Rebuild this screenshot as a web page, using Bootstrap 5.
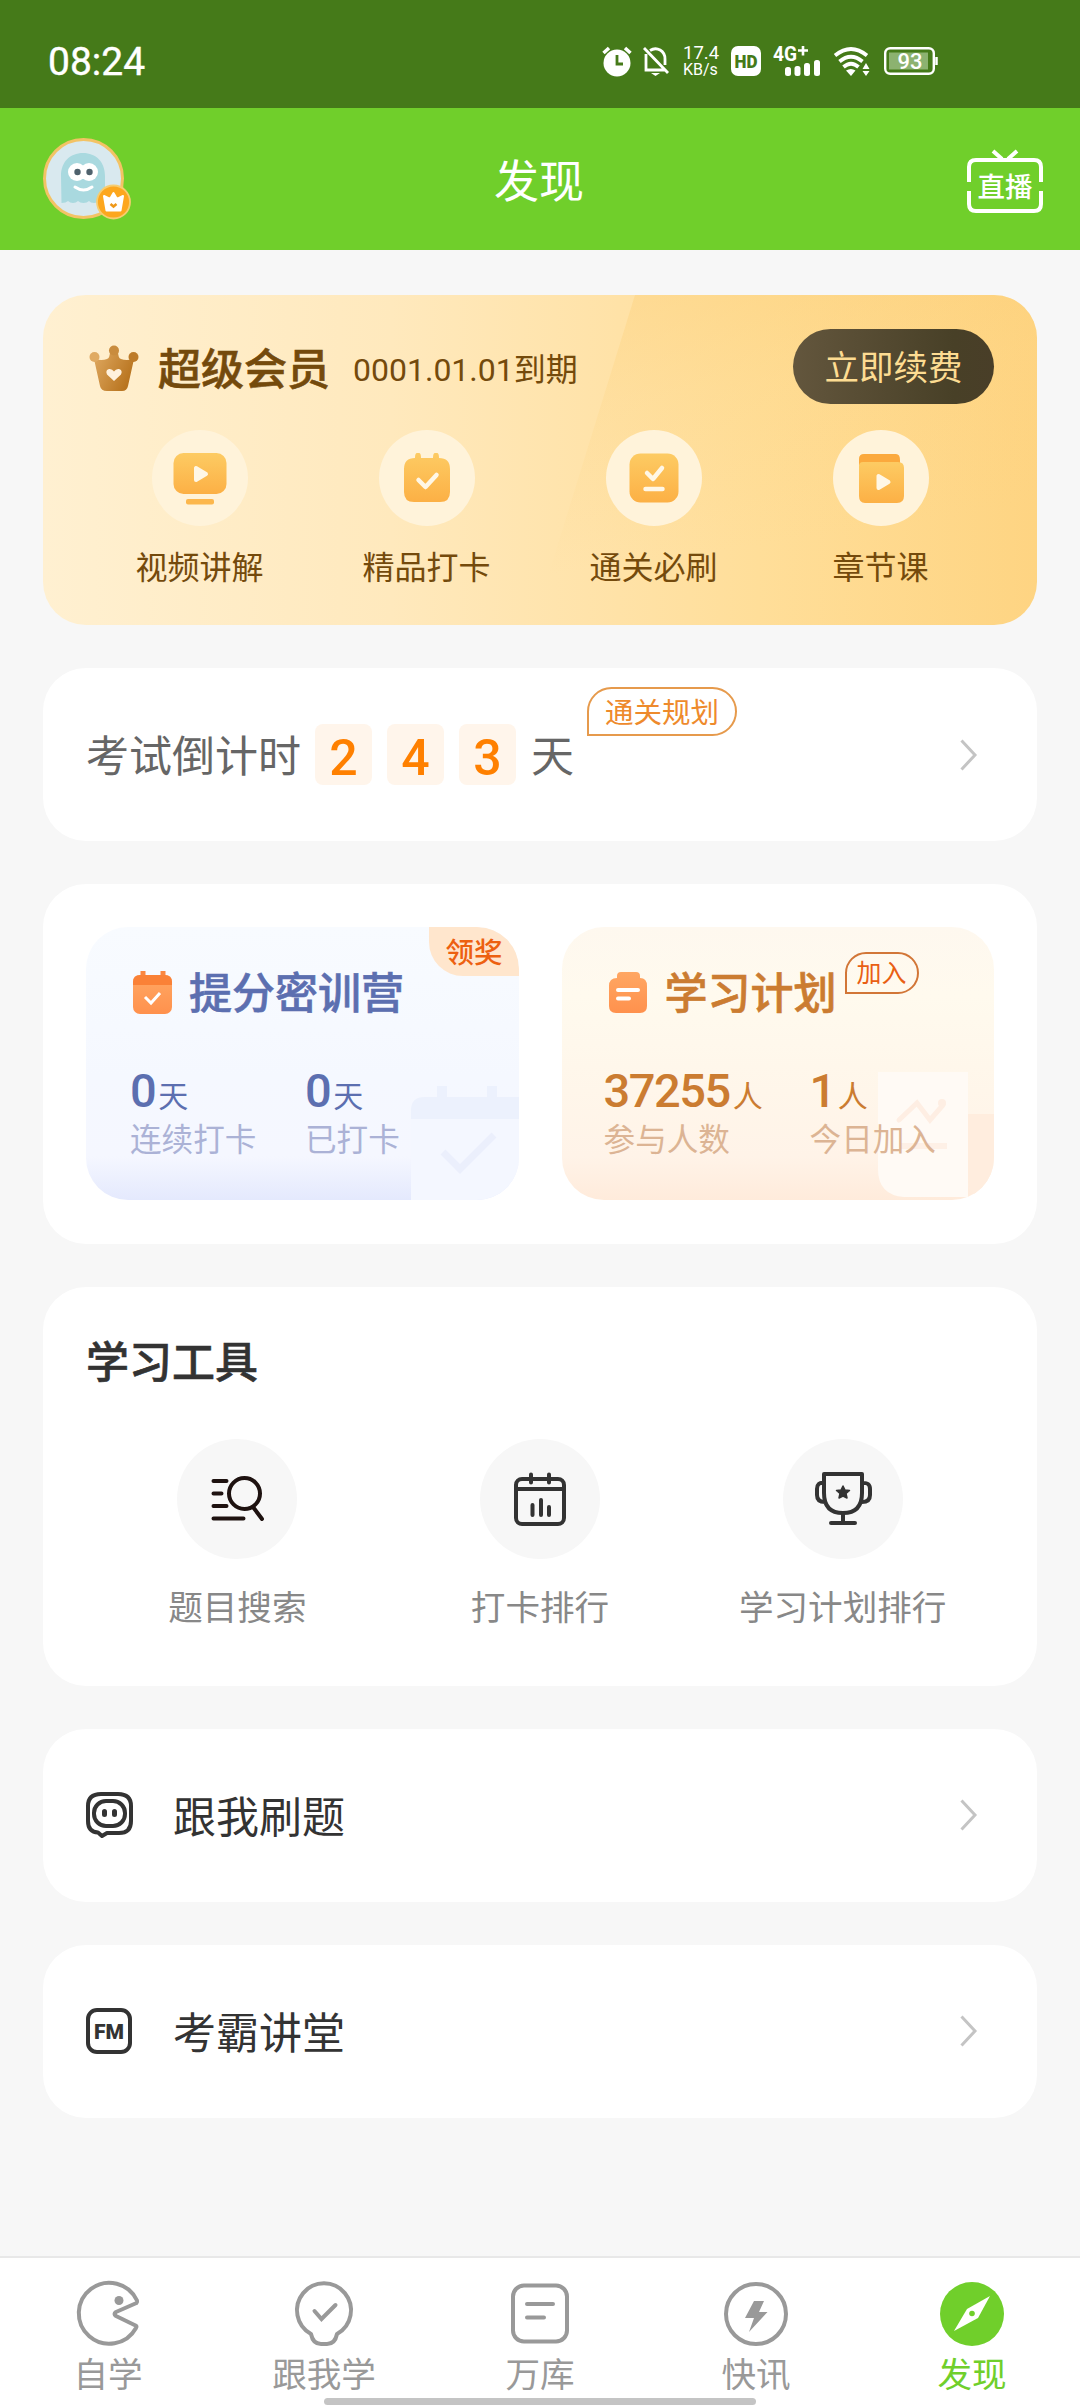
<!DOCTYPE html>
<html lang="zh-CN">
<head>
<meta charset="utf-8">
<meta name="viewport" content="width=device-width, initial-scale=1">
<title>发现</title>
<link href="https://cdn.jsdelivr.net/npm/bootstrap@5.3.0/dist/css/bootstrap.min.css" rel="stylesheet">
<style>
body{width:1080px;height:2408px;background:#f7f7f7;font-family:Roboto,"Noto Sans CJK SC",sans-serif;color:#333;overflow:hidden}
svg{display:block;flex:none;overflow:visible}
.statusbar{height:108px;background:#457a19;padding:14px 142px 0 48px;color:#fff}
.clock{font-size:39px;line-height:46px;font-weight:400;-webkit-text-stroke:.4px #fff;padding-top:2px}
.speed{font-size:18.5px;line-height:16px;width:36px;margin:0 12px 0 13px;white-space:nowrap}
.speed div+div{font-size:16px;line-height:16px;padding-top:1px}
.appbar{height:142px;background:#70cf2b;padding:0 37px 0 43px;color:#fff}
.apptitle{font-size:45px;line-height:60px;margin-left:-20px;padding-top:7px}
.panel{border:0;border-radius:43px;background:#fff}
.pagebody{padding:45px 43px 0;gap:43px}
.vip{height:330px;background:linear-gradient(90deg,#fff0d1 0%,#ffe9bd 35%,#ffe2a7 58%,#ffde99 72%,#fed482 100%);overflow:hidden;padding:34px 43px 0}
.vip::before{content:"";position:absolute;inset:0;clip-path:polygon(592px 0,100% 0,100% 100%,490px 100%);background:linear-gradient(172deg,rgba(251,201,105,.42) 0%,rgba(253,210,125,.22) 40%,rgba(255,215,140,0) 75%)}
.vip>*{position:relative}
.viphead{height:75px;padding-left:3px}
.viptitle{font-size:43px;font-weight:500;color:#744a0c;line-height:50px;margin-left:19px;padding-top:7px;-webkit-text-stroke:.6px #744a0c}
.vipdate{font-size:32px;color:#744a0c;line-height:50px;margin-left:23px;padding-top:7px}
.renew{width:201px;height:75px;border-radius:38px;background:linear-gradient(90deg,#63563d,#484027 80%,#493e28);color:#fddc92;font-size:34.5px;line-height:75px;padding:2px 0 0;border:0}
.vipitem{padding-top:26px}
.vipring{width:96px;height:96px;border-radius:50%;background:#fff3da}
.viplabel{font-size:32px;line-height:44px;margin-top:20px;color:#744a0c}
.countdown{height:173px;padding:0 60px 0 43px}
.cdtext{font-size:43px;line-height:60px;color:#666;padding-top:5px}
.digit{width:57px;height:61px;border-radius:8px;background:#fff5eb;color:#ff8000;font-size:50px;font-weight:500;line-height:69px;text-align:center}
.bubble{border:2px solid #e69a4c;border-radius:25px 25px 25px 0;color:#ee8a2c;text-align:center;white-space:nowrap}
.bub1{width:150px;height:49px;font-size:28.5px;line-height:49px;margin:-86px 0 0 13px}
.bub2{width:74px;height:42px;border-radius:21px 21px 21px 0;font-size:25px;line-height:39px;border-color:#d27637;color:#e95f13;margin:-40px 0 0 8px}
.plans{height:360px;padding:43px;gap:43px}
.plancard{height:273px;border-radius:42px;overflow:hidden;position:relative;padding:42px 0 0 44px}
.plan-a{background:linear-gradient(180deg,#f8fbff 0%,#f5f8ff 55%,#f5f7ff 84%,#e4e9fd 100%);color:#5c6fb0}
.plan-b{background:linear-gradient(180deg,#fef8ef 0%,#fffaee 25%,#fff6ea 60%,#fff3e8 84%,#ffebdb 100%);color:#cb7c31;padding-left:42px}
.deco{position:absolute;right:0;bottom:0}
.ribbon{position:absolute;right:0;top:0;width:90px;height:49px;background:#ffe6cd;border-radius:0 40px 0 34px;color:#ed6010;font-size:28.5px;font-weight:500;line-height:53px;padding-left:17px}
.planhead{height:48px;position:relative}
.plantitle{font-size:43px;font-weight:500;line-height:48px;margin-left:15px;padding-top:2px;-webkit-text-stroke:.6px currentColor}
.stats{margin-top:48px;position:relative}
.statnum{font-size:47px;font-weight:500;line-height:52px;letter-spacing:-1.5px;white-space:nowrap}
.statnum span{font-size:30px;font-weight:400;letter-spacing:0;margin-left:3px}
.statlabel{font-size:31.6px;line-height:44px;margin-top:-4px;white-space:nowrap}
.plan-a .statlabel{color:#abb2d6}
.plan-b .statlabel{color:#dcb494}
.tools{height:399px;padding:45px 43px 0}
.toolhead{font-size:43px;font-weight:500;line-height:62px;margin:0;-webkit-text-stroke:.6px #333}
.toolring{width:120px;height:120px;border-radius:50%;background:#f7f7f7;margin-top:45px}
.toollabel{font-size:34.6px;line-height:48px;margin-top:25px;color:#888}
.linkrow{height:173px;padding:0 60px 0 43px}
.linkrow>svg{margin-top:-2px}
.linktext{font-size:43px;line-height:60px;margin-left:40px;padding-top:4px}
.tabbar{position:fixed;left:0;bottom:0;width:1080px;height:152px;background:#fff;border-top:2px solid #e8e8e8;padding-top:22px}
.tabitem{flex:1 1 0;color:#999}
.tabitem.on{color:#70cf2b}
.tablabel{font-size:34.6px;line-height:44px;margin-top:5px}
.homebar{position:absolute;left:324px;bottom:3px;width:432px;height:7px;border-radius:4px;background:#c4c4c4}
</style>
</head>
<body>
<svg width="0" height="0" class="position-absolute"><defs>
<linearGradient id="gold" x1="0" y1="0" x2="0" y2="1"><stop offset="0" stop-color="#fdcb63"/><stop offset="1" stop-color="#fcb045"/></linearGradient>
<linearGradient id="bronze" x1="0" y1="0" x2="1" y2=".5"><stop offset="0" stop-color="#e0aa62"/><stop offset="1" stop-color="#b8741f"/></linearGradient>
<linearGradient id="orange" x1="0" y1="0" x2="0" y2="1"><stop offset="0" stop-color="#ffa763"/><stop offset="1" stop-color="#ff914d"/></linearGradient>
</defs></svg>

<div class="statusbar d-flex align-items-center justify-content-between">
  <div class="clock">08:24</div>
  <div class="d-flex align-items-center">
    <svg width="30" height="30" viewBox="0 0 30 30"><circle cx="15" cy="17" r="13.500" fill="#fff"/><path d="M1.500 7L7 2M28.500 7L23 2" stroke="#fff" stroke-width="3.500"/><path d="M15 9v9h6" fill="none" stroke="#457a19" stroke-width="2.800"/></svg>
    <svg class="ms-2" width="30" height="30" viewBox="0 0 30 30" fill="none" stroke="#fff" stroke-width="2.800"><path d="M4 2l24 25M6 8v16h19M10 4.500C17 0 25 5 25 13v6"/><path d="M11 27h9l-4.500 3z" fill="#fff" stroke="none"/></svg>
    <div class="speed"><div>17.4</div><div>KB/s</div></div>
    <svg width="30" height="30" viewBox="0 0 30 30"><rect width="30" height="30" rx="7" fill="#fff"/><text x="15" y="21.500" text-anchor="middle" font-size="18" font-weight="900" fill="#457a19" textLength="23" lengthAdjust="spacingAndGlyphs">HD</text></svg>
    <svg style="margin-left:12px" width="48" height="30" viewBox="0 0 48 30" fill="#fff"><text x="0" y="15" font-size="20" font-weight="700" textLength="24" lengthAdjust="spacingAndGlyphs">4G</text><path d="M25 4.500h10M30 0v9.500" stroke="#fff" stroke-width="2.600"/><rect x="12" y="21" width="6" height="9" rx="2.500"/><rect x="21.500" y="20" width="6" height="10" rx="2.500"/><rect x="31" y="17" width="6" height="13" rx="2.500"/><rect x="41" y="14" width="6" height="16" rx="2.500"/></svg>
    <svg style="margin-left:12px" width="38" height="30" viewBox="0 0 38 30" fill="none" stroke="#fff" stroke-width="3.800"><path d="M2 9.500Q18 -3.500 34 9.500M6.500 15.500Q18 6 29.500 15.500M10.500 21Q18 14.500 25.500 21" /><path d="M13 24.500Q18 21.500 22.500 24.500L18 30z" fill="#fff" stroke="none"/><path d="M33 17l3.500 6h-7zM33 30l3.500-5h-7z" fill="#fff" stroke="none"/></svg>
    <svg style="margin-left:13px" width="54" height="28" viewBox="0 0 54 28"><rect x="1.200" y="1.200" width="48.600" height="25.600" rx="5" fill="none" stroke="#fff" stroke-width="2.400"/><rect x="5" y="5.500" width="39" height="17" fill="#8cb270"/><path d="M52.500 10v8" stroke="#fff" stroke-width="2.500"/><text x="26" y="22" text-anchor="middle" font-size="22" font-weight="500" fill="#fff">93</text></svg>
  </div>
</div>

<div class="appbar d-flex align-items-center justify-content-between">
  <svg width="88" height="82" viewBox="0 0 88 82">
    <circle cx="40.500" cy="40.500" r="39" fill="#d9e9ef" stroke="#f3c365" stroke-width="3"/>
    <path d="M18 38C18 24 27 15 40 15s22 9 22 23v27q-4 0-5.500-2q-2 2-5.500 2t-5-2q-2 2-5.500 2t-5.500-2q-2 2-5 2t-5-2q-2 2-6.500 2z" fill="#a9d9df"/>
    <circle cx="34" cy="34" r="9" fill="#fff"/><circle cx="46" cy="34" r="9" fill="#fff"/><circle cx="34.500" cy="34" r="3.200" fill="#4f626d"/><circle cx="46.500" cy="34" r="3.200" fill="#4f626d"/>
    <path d="M32 49q8.500 6 17 0" fill="none" stroke="#fff" stroke-width="3" stroke-linecap="round"/>
    <circle cx="70.500" cy="64" r="16.500" fill="#fda71e" stroke="#f7cd70" stroke-width="1.800"/>
    <path d="M61 58l6 3 3.500-6 3.500 6 6-3-2.500 14.500h-14z" fill="#fff" stroke="#fff" stroke-width="2" stroke-linejoin="round"/><path d="M67.500 66l3 2.500 3-2.500" fill="none" stroke="#ef9818" stroke-width="2.500"/>
  </svg>
  <div class="apptitle">发现</div>
  <svg class="mt-1" width="76" height="66" viewBox="0 0 76 66" fill="none" stroke="#fff" stroke-width="4"><path d="M2 34V19q0-7 7-7h58q7 0 7 7v15M2 43v13q0 7 7 7h58q7 0 7-7V43M26 3l9 8M50 3l-9 8"/><text x="38" y="48.500" text-anchor="middle" font-size="27.500" font-weight="500" fill="#fff" stroke="none">直播</text></svg>
</div>

<main class="pagebody d-flex flex-column">
  <section class="panel vip card">
    <div class="viphead d-flex align-items-center">
      <svg class="mt-1" width="50" height="47" viewBox="0 0 50 47"><path d="M5 14q8 2 13 0 3-1 3-8h8q0 7 3 8 5 2 13 0l-6 27q-1 5-6 5H18q-6 0-7-5z" fill="url(#bronze)"/><circle cx="5.500" cy="12" r="5" fill="#e0aa62"/><circle cx="25" cy="5.500" r="5" fill="#c98c3e"/><circle cx="44.500" cy="12" r="5" fill="#bd7b28"/><path d="M25 36l-7-6.500q-2-4.500 2-5.500 3-.5 5 2.500 2-3 5-2.500 4 1 2 5.500z" fill="#fff1dd"/></svg>
      <div class="viptitle">超级会员</div>
      <div class="vipdate">0001.01.01到期</div>
      <button class="btn renew ms-auto">立即续费</button>
    </div>
    <div class="row g-0 text-center">
      <div class="col vipitem"><div class="vipring mx-auto d-flex align-items-center justify-content-center"><svg width="54" height="54" viewBox="0 0 54 54"><rect x="0.500" y="2" width="53" height="41" rx="10" fill="url(#gold)"/><rect x="13" y="48" width="28" height="5.500" rx="2" fill="#fcb74d"/><path d="M23 17v12l10-6z" fill="#fff7e6" stroke="#fff7e6" stroke-width="4" stroke-linejoin="round"/></svg></div><div class="viplabel">视频讲解</div></div>
      <div class="col vipitem"><div class="vipring mx-auto d-flex align-items-center justify-content-center"><svg width="48" height="50" viewBox="0 0 48 50"><path d="M14 0h2q2 0 2 5h12q0-5 2-5h2q2 0 2 5 11 0 11 11v23q0 10-10 10H11Q1 49 1 39V16Q1 5 12 5q0-5 2-5z" fill="url(#gold)"/><path d="M15.500 27l7 7 11-12" fill="none" stroke="#fff7e6" stroke-width="4.500" stroke-linecap="round" stroke-linejoin="round"/></svg></div><div class="viplabel">精品打卡</div></div>
      <div class="col vipitem"><div class="vipring mx-auto d-flex align-items-center justify-content-center"><svg width="50" height="50" viewBox="0 0 50 50"><rect x=".5" y=".5" width="49" height="49" rx="11" fill="url(#gold)"/><path d="M18 20l6 6 9-11M16.500 36h17" fill="none" stroke="#fff7e6" stroke-width="4.500" stroke-linecap="round" stroke-linejoin="round"/></svg></div><div class="viplabel">通关必刷</div></div>
      <div class="col vipitem"><div class="vipring mx-auto d-flex align-items-center justify-content-center"><svg width="48" height="50" viewBox="0 0 48 50"><path d="M2 12V6q0-5 5-5h32q4 0 4 6v5z" fill="#fba93d"/><path d="M6 9h35q6 0 6 6v28q0 7-7 7H8q-6 0-6-7V13q0-4 4-4z" fill="url(#gold)"/><path d="M21.500 23v12l10-6z" fill="#fff7e6" stroke="#fff7e6" stroke-width="4" stroke-linejoin="round"/></svg></div><div class="viplabel">章节课</div></div>
    </div>
  </section>

  <section class="panel countdown d-flex align-items-center">
    <div class="cdtext">考试倒计时</div>
    <div class="d-flex" style="gap:15px;margin:0 15px 0 14px"><div class="digit">2</div><div class="digit">4</div><div class="digit">3</div></div>
    <div class="cdtext">天</div>
    <div class="bubble bub1">通关规划</div>
    <svg class="ms-auto" width="17" height="32" viewBox="0 0 17 32" fill="none" stroke="#c4c4c4" stroke-width="3"><path d="M1.500 1.500L15 16 1.500 30.500"/></svg>
  </section>

  <section class="panel plans d-flex">
    <div class="plancard plan-a flex-fill w-50">
      <svg class="deco" width="108" height="114" viewBox="0 0 108 114"><path d="M26 0h10v14H26zM76 0h10v14H76zM0 33V24Q0 11 14 11h94v22z" fill="#ecf1fd"/><path d="M0 33h108v81H0z" fill="#f4f7ff"/><path d="M32 66l17 17 34-34" fill="none" stroke="#ebeffc" stroke-width="7"/></svg>
      <div class="ribbon">领奖</div>
      <div class="planhead d-flex align-items-center">
        <svg width="44" height="46" viewBox="0 0 44 46"><path d="M13 1v8M33 1v8" stroke="#fb8740" stroke-width="5"/><rect x="3" y="5" width="39" height="39" rx="7" fill="url(#orange)"/><path d="M3 15v-3q0-7 7-7h25q7 0 7 7v3z" fill="#fa8137"/><path d="M15 27l6 6 9-10" fill="none" stroke="#fff" stroke-width="3"/></svg>
        <div class="plantitle">提分密训营</div>
      </div>
      <div class="stats d-flex"><div style="width:175px"><div class="statnum">0<span>天</span></div><div class="statlabel">连续打卡</div></div><div><div class="statnum">0<span>天</span></div><div class="statlabel">已打卡</div></div></div>
    </div>
    <div class="plancard plan-b flex-fill w-50">
      <svg class="deco" width="116" height="130" viewBox="0 0 116 130"><path d="M0 2h90v125H26Q0 125 0 99z" fill="#fffaf5"/><path d="M90 44h26v68q-6 10-17 14-9-5-9-18z" fill="#ffedde"/><path d="M21 50l18-17 13 17 13-15" fill="none" stroke="#feeee3" stroke-width="5" stroke-linecap="round"/><circle cx="64" cy="33" r="4" fill="#feeee3"/><path d="M21 76h48" stroke="#fef0e6" stroke-width="6"/></svg>
      <div class="planhead d-flex align-items-center">
        <svg width="46" height="46" viewBox="0 0 46 46"><path d="M13 8V6q0-4 4-4h15q4 0 4 4v2q7 0 7 8v20q0 7-7 7H12q-7 0-7-7V16q0-8 8-8z" fill="url(#orange)"/><path d="M14 20h20M14 28.500h11" stroke="#fff" stroke-width="4" stroke-linecap="round"/></svg>
        <div class="plantitle">学习计划</div>
        <div class="bubble bub2">加入</div>
      </div>
      <div class="stats d-flex"><div style="width:206px"><div class="statnum">37255<span>人</span></div><div class="statlabel">参与人数</div></div><div><div class="statnum">1<span>人</span></div><div class="statlabel">今日加入</div></div></div>
    </div>
  </section>

  <section class="panel tools">
    <h2 class="toolhead">学习工具</h2>
    <div class="row g-0 text-center">
      <div class="col"><div class="toolring mx-auto d-flex align-items-center justify-content-center"><svg width="54" height="48" viewBox="0 0 54 48" fill="none" stroke="#1e1210" stroke-width="4" stroke-linecap="round"><path d="M3.500 6h13M3.500 18.500h8M3.500 31h13M3.500 43.500h30M43 32l9 12"/><circle cx="34.500" cy="18.500" r="15.500"/></svg></div><div class="toollabel">题目搜索</div></div>
      <div class="col"><div class="toolring mx-auto d-flex align-items-center justify-content-center"><svg width="52" height="54" viewBox="0 0 52 54" fill="none" stroke="#333" stroke-width="4"><rect x="2" y="7" width="48" height="45" rx="6"/><path d="M2 17h48"/><path d="M17 2.500v8M35 2.500v8M18.500 33v10M27 28v15M35 35v8" stroke-linecap="round"/></svg></div><div class="toollabel">打卡排行</div></div>
      <div class="col"><div class="toolring mx-auto d-flex align-items-center justify-content-center"><svg width="58" height="54" viewBox="0 0 58 54" fill="none" stroke="#333" stroke-width="4"><path d="M10 2h38v19Q48 41 29 41T10 21zM10 11Q3 10 3 17v6q0 7 8 7M48 11q8-1 8 6v6q0 7-8 7" stroke-linejoin="round"/><path d="M29 41v10M17 51h24" stroke-linecap="round"/><path d="M29 14l2 4 4.500.5-3.500 3 1 4.500-4-2-4 2 1-4.500-3.500-3 4.500-.5z" fill="#333" stroke-width="1.500" stroke-linejoin="round"/></svg></div><div class="toollabel">学习计划排行</div></div>
    </div>
  </section>

  <section class="panel linkrow d-flex align-items-center">
    <svg width="47" height="46" viewBox="0 0 47 46" fill="none" stroke="#333" stroke-width="4" stroke-linejoin="round"><path d="M15 2h17q13 0 13 12v15q0 12-12 12H21l-5 3-4-3.500Q2 40 2 29V14Q2 2 15 2z"/><rect x="8" y="9" width="31" height="25" rx="12"/><path d="M18.500 19.500v3M28.500 19.500v3" stroke-width="5" stroke-linecap="round"/></svg>
    <div class="linktext">跟我刷题</div>
    <svg class="ms-auto" width="17" height="32" viewBox="0 0 17 32" fill="none" stroke="#c4c4c4" stroke-width="3"><path d="M1.500 1.500L15 16 1.500 30.500"/></svg>
  </section>

  <section class="panel linkrow d-flex align-items-center">
    <svg width="47" height="46" viewBox="0 0 47 46"><rect x="2" y="2" width="42" height="42" rx="9" fill="none" stroke="#333" stroke-width="4"/><text x="23" y="30.500" text-anchor="middle" font-size="21" font-weight="900" fill="#333" textLength="30" lengthAdjust="spacingAndGlyphs">FM</text></svg>
    <div class="linktext">考霸讲堂</div>
    <svg class="ms-auto" width="17" height="32" viewBox="0 0 17 32" fill="none" stroke="#c4c4c4" stroke-width="3"><path d="M1.500 1.500L15 16 1.500 30.500"/></svg>
  </section>
</main>

<nav class="tabbar d-flex text-center">
  <div class="tabitem"><svg class="mx-auto" width="66" height="68" viewBox="0 0 66 68" fill="none" stroke="#999" stroke-width="4"><path d="M61.500 23q1-1 .5-2.500A30.500 30.500 0 1 0 61 48q1-1.500-.5-2.500L41 36q-3-2 0-4z" stroke-linejoin="round"/><circle cx="44" cy="20.500" r="4.500" fill="#999" stroke="none"/></svg><div class="tablabel">自学</div></div>
  <div class="tabitem"><svg class="mx-auto" width="66" height="68" viewBox="0 0 66 68" fill="none" stroke="#999" stroke-width="4"><path d="M20 54A27 27 0 1 1 46 54Q44 64 36 64h-6Q22 64 20 54z" stroke-linejoin="round"/><path d="M23.500 31l7 8L44.500 25" stroke-linecap="round"/></svg><div class="tablabel">跟我学</div></div>
  <div class="tabitem"><svg class="mx-auto" width="66" height="68" viewBox="0 0 66 68" fill="none" stroke="#999" stroke-width="4"><rect x="6" y="5.500" width="54" height="56" rx="11"/><path d="M20 24h26M20 37.500h17" stroke-linecap="round"/></svg><div class="tablabel">万库</div></div>
  <div class="tabitem"><svg class="mx-auto" width="66" height="68" viewBox="0 0 66 68"><circle cx="33" cy="34" r="30" fill="none" stroke="#999" stroke-width="4"/><path d="M31 21h10l-5 11h8.500L26 52l5-14h-9z" fill="#999"/></svg><div class="tablabel">快讯</div></div>
  <div class="tabitem on"><svg class="mx-auto" width="66" height="68" viewBox="0 0 66 68"><circle cx="33" cy="34" r="32" fill="#70cf2b"/><path d="M51 16L39 38 15 51 28 29z" fill="#fff"/><circle cx="33" cy="33.500" r="2.800" fill="#70cf2b"/></svg><div class="tablabel">发现</div></div>
  <div class="homebar"></div>
</nav>
<script src="https://cdn.jsdelivr.net/npm/bootstrap@5.3.0/dist/js/bootstrap.bundle.min.js"></script>
</body>
</html>
